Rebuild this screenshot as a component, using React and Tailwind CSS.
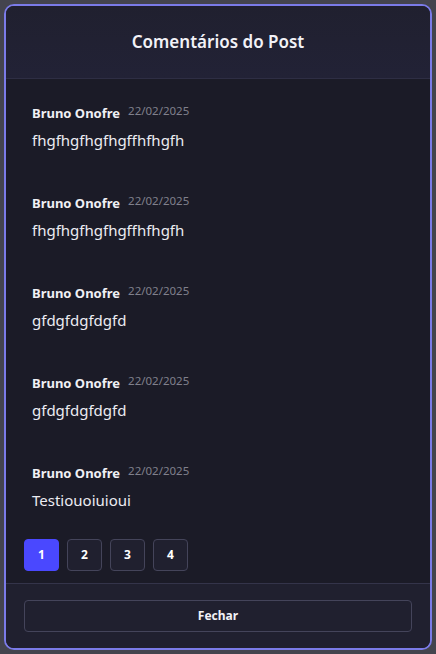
import React, { useState } from 'react';

const comments = [
  { author: 'Bruno Onofre', date: '22/02/2025', text: 'fhgfhgfhgfhgffhfhgfh' },
  { author: 'Bruno Onofre', date: '22/02/2025', text: 'fhgfhgfhgfhgffhfhgfh' },
  { author: 'Bruno Onofre', date: '22/02/2025', text: 'gfdgfdgfdgfd' },
  { author: 'Bruno Onofre', date: '22/02/2025', text: 'gfdgfdgfdgfd' },
  { author: 'Bruno Onofre', date: '22/02/2025', text: 'Testiouoiuioui' },
];

export default function App() {
  const [page, setPage] = useState(1);

  return (
    <div
      className="w-[436px] h-[654px] bg-[#44444e] p-[4px]"
      style={{ fontFamily: '"Noto Sans", "Open Sans", sans-serif' }}
    >
      <div className="h-full flex flex-col border-2 border-[#7b7be8] rounded-[10px] overflow-hidden bg-[#1b1b27]">
        {/* Header */}
        <div className="h-[73px] shrink-0 flex items-center justify-center bg-gradient-to-b from-[#20202f] to-[#222236] border-b border-[#2e2e44]">
          <h2 className="text-[17px] font-semibold text-[#f2f2f7]">Comentários do Post</h2>
        </div>

        {/* Comments */}
        <div className="flex-1 flex flex-col px-[18px] pt-[16px]">
          <div className="flex flex-col gap-[34px]">
            {comments.map((c, i) => (
              <div key={i} className="px-[8px] pt-[9px]">
                <div className="flex items-start gap-[8px]">
                  <span className="text-[13px] leading-[18px] font-bold text-[#f0f0f5]">{c.author}</span>
                  <span className="text-[11.5px] leading-[14px] text-[#80808c]">{c.date}</span>
                </div>
                <p className="mt-[7px] text-[15px] leading-[22px] text-[#ececf2]">{c.text}</p>
              </div>
            ))}
          </div>

          {/* Pagination */}
          <div className="flex gap-[8px] mt-[28px]">
            {[1, 2, 3, 4].map((n) => (
              <button
                key={n}
                onClick={() => setPage(n)}
                className={`w-[35px] h-[32px] rounded-[4px] text-[12px] font-bold text-white flex items-center justify-center ${
                  page === n
                    ? 'bg-[#4a48ff] border border-[#4a48ff]'
                    : 'bg-[#20202f] border border-[#44445a]'
                }`}
              >
                {n}
              </button>
            ))}
          </div>
        </div>

        {/* Footer */}
        <div className="h-[65px] shrink-0 border-t border-[#34344a] bg-[#20202f] px-[18px] pt-[16px]">
          <button className="w-full h-[32px] rounded-[4px] border border-[#44445a] bg-[#20202f] text-[12px] font-bold text-[#f2f2f7]">
            Fechar
          </button>
        </div>
      </div>
    </div>
  );
}
